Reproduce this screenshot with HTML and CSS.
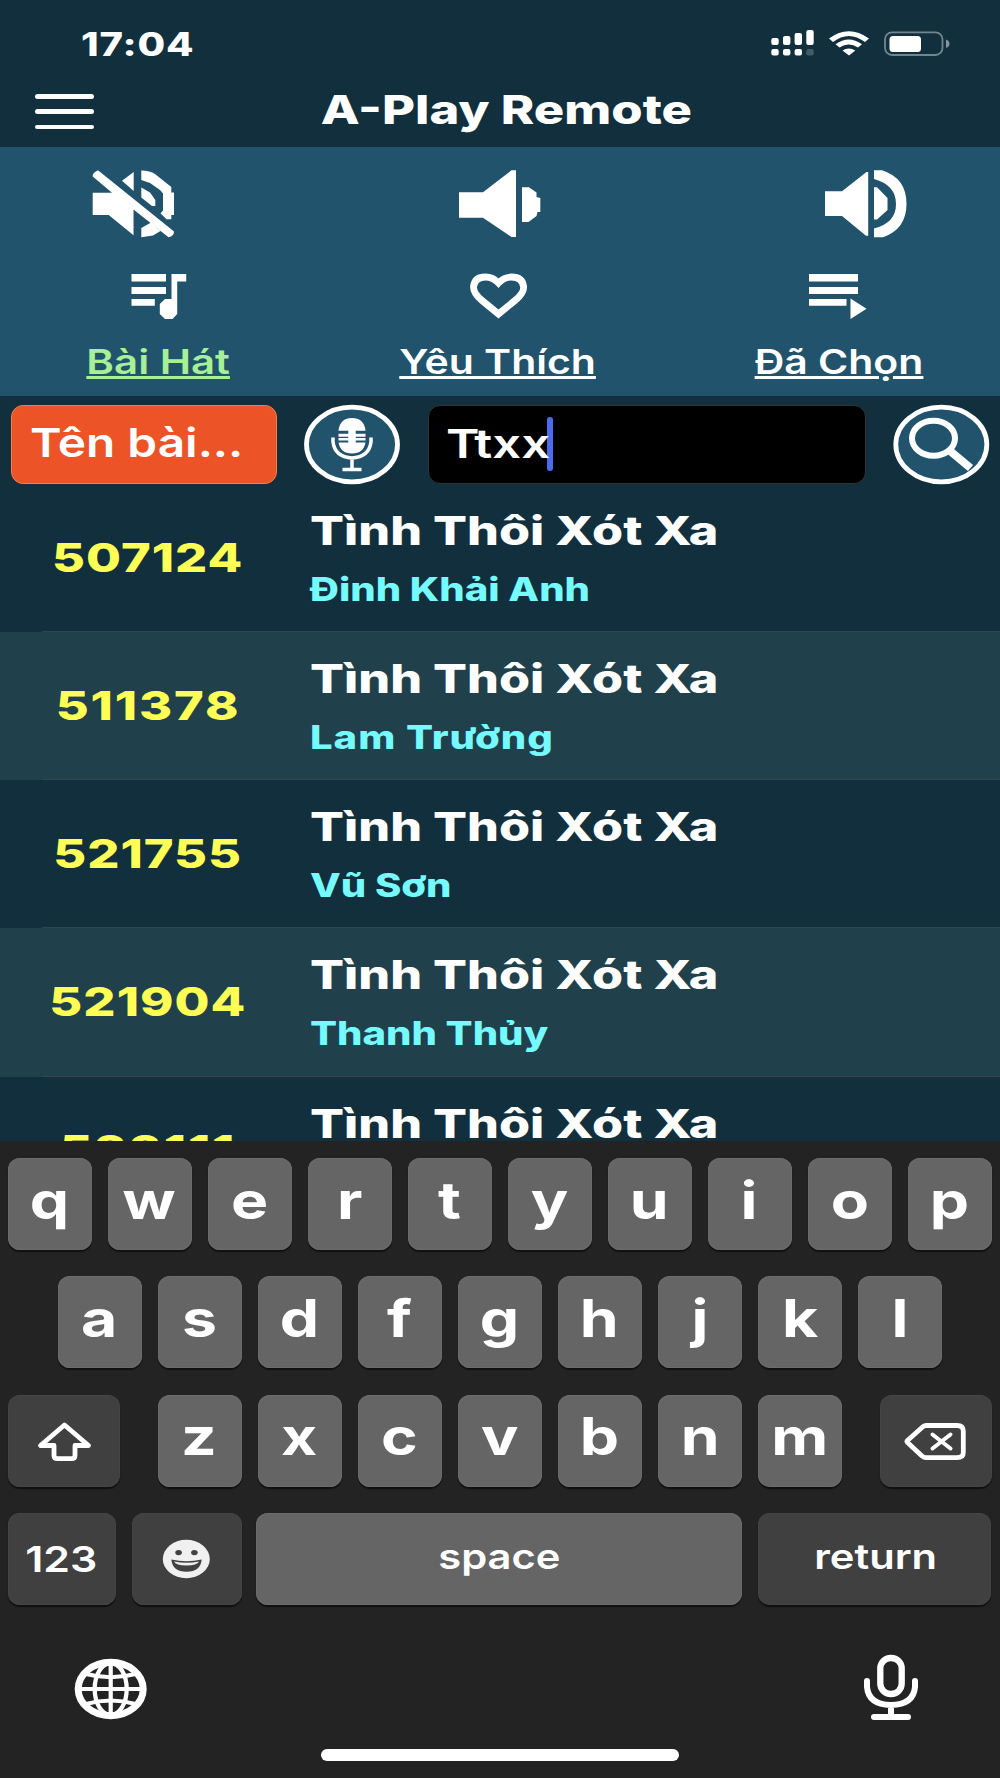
FILE: index.html
```html
<!DOCTYPE html>
<html lang="vi">
<head>
<meta charset="utf-8">
<title>A-Play Remote</title>
<link rel="stylesheet" href="styles.css">
</head>
<body>
<div class="phone">
  <header class="top">
    <div class="status">
      <span class="wide time">17:04</span>
      <svg class="status-icons" viewBox="770 28 182 30">
        <g fill="#fff">
          <rect x="771.3" y="38" width="7.4" height="7" rx="2"/><rect x="783" y="36" width="7.4" height="9" rx="2"/><rect x="794.6" y="33" width="7.4" height="12" rx="2"/><rect x="806.3" y="30" width="7.4" height="15" rx="2"/>
          <rect x="771.3" y="49" width="7.4" height="6.6" rx="2"/><rect x="783" y="49" width="7.4" height="6.6" rx="2"/><rect x="794.6" y="49" width="7.4" height="6.6" rx="2"/><rect x="806.3" y="49" width="7.4" height="6.6" rx="2" opacity=".22"/>
          <path d="M829 38.500Q848.700 24 869 38.500L865 42Q848.700 30 833 42Z"/>
          <path d="M835.500 44.300Q848.700 34.500 862 44.300L858 47.600Q848.700 41.200 839.500 47.600Z"/>
          <path d="M842.500 50.500Q848.700 46.300 855.300 50.500L849 55.500Z"/>
          <rect x="889.5" y="36" width="31.5" height="16" rx="3.500"/>
        </g>
        <rect x="885" y="32.300" width="57.500" height="22.700" rx="7" fill="none" stroke="#72868f" stroke-width="1.800"/>
        <path d="M946 39.500Q949.500 41 949.500 43.800Q949.500 46.500 946 48Z" fill="#8496a0"/>
      </svg>
    </div>
    <div class="nav">
      <button class="menu" aria-label="Menu"><i></i><i></i><i></i></button>
      <h1><span class="wide app-name">A-Play Remote</span></h1>
    </div>
  </header>

  <section class="panel">
    <svg class="volume" viewBox="0 160 1000 90" fill="#fff">
      <path d="M92.700 192.700H112L92.700 176.500Q92 173 98 170.300L174 231.500Q174 236 168.500 237.300L133.500 209.500V235.300L108.700 215H92.700Z"/>
      <path d="M122 180.700L133.700 172V191Z"/>
      <path d="M141.300 187.500L150 192.500L155.300 200V206H152L141.300 197.500Z"/>
      <path d="M141.300 170.500Q150 170.500 155 174L171.300 187V192.500H174V215H171.300V219.300H166.500L160.500 213.500L163 210.500V193.500L160 190L150 183L141.300 180Z"/>
      <path d="M141.300 237.300V228L151 222.500L160.500 231L153 235.500Z"/>
      <path d="M459 192.300H483L511.500 170.300H516V237H511.500L483 217.700H459Z"/>
      <path d="M522 187.300H529L536.500 192.500V197L540.300 198V212H537.500L536.500 216L528.500 222H522Z"/>
      <path d="M825 191.300H842L866.500 172H868.200V235.700H866L842 216H825Z"/>
      <path d="M874 187.300H877L887.500 198V210L877 219.500H874Z"/>
      <path d="M874 170.300H882Q906.500 178 906.500 204Q906.500 229 883 237.300H874V228.500Q896 223 896 204Q896 185 874 179Z"/>
    </svg>
    <div class="tabs">
      <a class="tab tab-active">
        <svg class="tab-icon" viewBox="129.500 272 60 49" fill="#fff">
          <path d="M132 274H166.500V281.500H132ZM132 287H166.500V294H132ZM132 299H155.300V305.800H132Z"/>
          <path d="M172 274H186.700V281.500H177.700V314L173 319H165.500L160.300 314V304L165.500 299H172Z"/>
        </svg>
        <span class="wide tab-label tab-songs">Bài Hát</span>
      </a>
      <a class="tab tab-mid">
        <svg class="tab-icon heart" viewBox="468 272 60 49"><path d="M498.500 314L482 300.500Q473.500 293.500 473.500 287Q474.500 277 485.500 277Q493 277 498.500 283Q504 277 511.500 277Q522.500 277 523.700 287Q523.700 293.500 515 300.500Z" fill="none" stroke="currentColor" stroke-width="6.800"/></svg>
        <span class="wide tab-label tab-fav">Yêu Thích</span>
      </a>
      <a class="tab tab-last">
        <svg class="tab-icon" viewBox="810.500 272 60 49" fill="currentColor">
          <path d="M809.500 274H858.500V281.500H809.500ZM809.500 287H858.500V294H809.500ZM809.500 299H847V305.800H809.500Z"/>
          <path d="M851 298.500L867 308.700L851 319Z"/>
        </svg>
        <span class="wide tab-label tab-picked">Đã Chọn</span>
      </a>
    </div>
  </section>

  <section class="search">
    <button class="filter"><span class="wide filter-label">Tên bài...</span></button>
    <svg class="round" viewBox="303 404 98 81">
      <ellipse cx="352" cy="444.500" rx="45.500" ry="37.300" fill="#21546c" stroke="#fff" stroke-width="4.800"/>
      <path d="M338.500 430.500Q340 418 352 418Q364 418 365.500 430.500ZM338.500 442.500Q340.500 453.500 352 453.500Q363.500 453.500 365.500 442.500Z" fill="#fff"/>
      <path d="M348.300 430H355.700V443H348.300ZM338.500 430.500H365.500V431H338.500ZM338.500 433.700H365.500V436.700H338.500ZM338.500 438H365.500V440.500H338.500Z" fill="#fff"/>
      <path d="M333 437.500V442Q335 457 352 458Q369 457 371 442V437.500M352 458V469M342.500 469.500H361.500" fill="none" stroke="#fff" stroke-width="3.500"/>
    </svg>
    <div class="field"><span class="wide query">Ttxx</span><i class="caret"></i></div>
    <svg class="round" viewBox="892 404 98 81">
      <ellipse cx="941.300" cy="444.500" rx="45.500" ry="37.300" fill="#21546c" stroke="#fff" stroke-width="4.800"/>
      <ellipse cx="933.500" cy="438.300" rx="21.500" ry="17.500" fill="none" stroke="#fff" stroke-width="6"/>
      <path d="M949.500 450.500L970.500 468" stroke="#fff" stroke-width="8"/>
    </svg>
  </section>

  <main class="list">
    <article class="row"><div class="code"><span class="wide num">507124</span></div><div class="song"><h2><span class="wide title">Tình Thôi Xót Xa</span></h2><p><span class="wide singer">Đinh Khải Anh</span></p></div></article>
    <article class="row"><div class="code"><span class="wide num num-loose">511378</span></div><div class="song"><h2><span class="wide title">Tình Thôi Xót Xa</span></h2><p><span class="wide singer loose">Lam Trường</span></p></div></article>
    <article class="row"><div class="code"><span class="wide num">521755</span></div><div class="song"><h2><span class="wide title">Tình Thôi Xót Xa</span></h2><p><span class="wide singer">Vũ Sơn</span></p></div></article>
    <article class="row"><div class="code"><span class="wide num">521904</span></div><div class="song"><h2><span class="wide title">Tình Thôi Xót Xa</span></h2><p><span class="wide singer">Thanh Thủy</span></p></div></article>
    <article class="row"><div class="code"><span class="wide num num-loose">523111</span></div><div class="song"><h2><span class="wide title">Tình Thôi Xót Xa</span></h2></div></article>
  </main>

  <section class="keyboard">
    <div class="keys"><b class="key"><span>q</span></b><b class="key"><span>w</span></b><b class="key"><span>e</span></b><b class="key"><span>r</span></b><b class="key"><span>t</span></b><b class="key"><span>y</span></b><b class="key"><span>u</span></b><b class="key"><span>i</span></b><b class="key"><span>o</span></b><b class="key"><span>p</span></b></div>
    <div class="keys"><b class="key"><span>a</span></b><b class="key"><span>s</span></b><b class="key"><span>d</span></b><b class="key"><span>f</span></b><b class="key"><span>g</span></b><b class="key"><span>h</span></b><b class="key"><span>j</span></b><b class="key"><span>k</span></b><b class="key"><span>l</span></b></div>
    <div class="keys spread">
      <b class="key dark side"><svg class="glyph" viewBox="8 1394 112 92"><path d="M64.500 1424L40.500 1444.500H54V1454.500Q54 1457.700 57.500 1457.700H71.500Q75 1457.700 75 1454.500V1444.500H88.500Z" fill="none" stroke="#fff" stroke-width="4.800" stroke-linejoin="round"/></svg></b>
      <div class="keys"><b class="key"><span>z</span></b><b class="key"><span>x</span></b><b class="key"><span>c</span></b><b class="key"><span>v</span></b><b class="key"><span>b</span></b><b class="key"><span>n</span></b><b class="key"><span>m</span></b></div>
      <b class="key dark side"><svg class="glyph" viewBox="880 1394 112 92" fill="none" stroke="#fff" stroke-linejoin="round" stroke-linecap="round"><path d="M926 1424.500H957Q963.300 1424.500 963.300 1430V1451.500Q963.300 1456.700 957 1456.700H926Q924 1456.700 922 1455L907.500 1441.500Q906.500 1440.500 907.500 1439.500L922 1426.500Q924 1424.500 926 1424.500Z" stroke-width="4.800"/><path d="M932.500 1433.500L950.500 1447.500M950.500 1433.500L932.500 1447.500" stroke-width="4"/></svg></b>
    </div>
    <div class="keys bottom">
      <b class="key dark numeric"><span>123</span></b>
      <b class="key dark emoji"><svg class="glyph" viewBox="132 1513 110 92"><ellipse cx="186.300" cy="1559" rx="23.500" ry="19.200" fill="#f0f0f0"/><g fill="#414141"><ellipse cx="178.600" cy="1552.600" rx="3.300" ry="2.700"/><ellipse cx="194.400" cy="1552.600" rx="3.300" ry="2.700"/><path d="M171.300 1559.500Q186.500 1563 201.700 1559.500Q200.500 1571.800 186.500 1571.800Q172.500 1571.800 171.300 1559.500Z"/></g><path d="M174 1561.500Q186.500 1564 199 1561.500Q197 1565.500 186.500 1565.500Q176 1565.500 174 1561.500Z" fill="#f0f0f0"/></svg></b>
      <b class="key space"><span>space</span></b>
      <b class="key dark return"><span>return</span></b>
    </div>
    <div class="dock">
      <svg class="globe" viewBox="74 1658 74 62" fill="none" stroke="#fff"><ellipse cx="110.700" cy="1689" rx="32.500" ry="26.700" stroke-width="7"/><ellipse cx="110.700" cy="1689" rx="16" ry="26" stroke-width="4.300"/><path d="M110.700 1662V1716M78 1689H143" stroke-width="4.200"/><path d="M86 1674Q110.700 1680.500 135.500 1674M86 1704Q110.700 1697 135.500 1704" stroke-width="4"/></svg>
      <svg class="dictate" viewBox="862 1653 58 69" fill="none" stroke="#fff" stroke-linecap="round"><rect x="880.300" y="1658" width="21.400" height="36" rx="10.500" stroke-width="6.300"/><path d="M867 1681V1687Q868.500 1704.500 891 1705Q913.500 1704.500 915 1687V1681M891 1706V1716M874 1717H908" stroke-width="6"/></svg>
    </div>
    <div class="home"></div>
  </section>
</div>
</body>
</html>
```
FILE: styles.css
```css
* { box-sizing: border-box; }
body { margin: 0; background: #112f3c; }
button { padding: 0; border: 0; background: none; font: inherit; color: inherit; }
h1, h2, p { margin: 0; font: inherit; }
svg { display: block; }

.phone {
  width: 1000px; height: 1778px; overflow: hidden;
  display: flex; flex-direction: column;
  background: #112f3c; color: #fff;
  font-family: Inter, "Liberation Sans", sans-serif;
}
.wide { display: inline-block; white-space: nowrap; transform: scaleX(1.25); }

/* header */
.top { height: 147px; flex: none; }
.status { height: 80px; display: flex; justify-content: space-between; padding: 28px 48px 0 81px; }
.time { font-size: 32px; line-height: 33px; font-weight: 800; letter-spacing: .7px; transform-origin: left; }
.status-icons { width: 182px; height: 30px; }
.nav { height: 67px; display: grid; grid-template-columns: 165px 1fr 187px; padding-left: 35px; }
.menu { width: 59px; height: 35px; margin-top: 14px; display: flex; flex-direction: column; justify-content: space-between; }
.menu i { height: 4.5px; border-radius: 3px; background: #fff; }
.nav h1 { text-align: center; font-size: 40px; line-height: 60px; font-weight: 800; }
.app-name { transform: scaleX(1.268); }

/* volume and tabs */
.panel { height: 249px; flex: none; background: #21546c; padding-top: 13px; }
.volume { width: 1000px; height: 90px; }
.tabs { display: grid; grid-template-columns: 317px 362px 321px; padding-top: 22px; }
.tab { display: flex; flex-direction: column; align-items: center; }
.tab-icon { width: 60px; height: 49px; overflow: visible; }
.tab-label { margin-top: 17px; font-size: 34px; line-height: 48px; font-weight: 600; transform: scaleX(1.205); text-decoration: underline; text-decoration-thickness: 3px; text-underline-offset: 2px; }
.tab-songs { color: #a6f098; transform: scaleX(1.235); }

/* search bar */
.search { height: 88px; flex: none; display: flex; padding: 9px 10px 0 11px; }
.filter { width: 266px; height: 79px; border: 1px solid #f07d4c; border-radius: 12px; background: #ec5428; text-align: left; padding: 0 0 3px 18px; }
.filter-label, .query { font-size: 40px; line-height: 48px; font-weight: 600; transform: scaleX(1.195); transform-origin: left; }
.round { width: 98px; height: 81px; margin: -1px 0 0 26px; flex: none; }
.field { width: 438px; height: 79px; margin-left: 27px; border: 1.5px solid #333; border-radius: 12px; background: #000; display: flex; align-items: center; padding: 0 0 2px 17px; }
.field + .round { margin-left: 26px; }
.query { width: 101px; transform: scaleX(1.27); }
.caret { width: 6px; height: 54px; border-radius: 3px; background: #4c6cf0; }

/* song list */
.list { height: 657px; flex: none; overflow: hidden; }
.row { height: 148.150px; display: grid; grid-template-columns: 296px 1fr; }
.row:nth-child(even) { background: #20404c; }
.row { border-bottom: 1px solid; border-image: linear-gradient(90deg, transparent 43px, #30474f 43px) 1; }
.code { text-align: center; color: #ffff55; font-size: 40px; line-height: 48px; font-weight: 800; padding-top: 49.500px; }
.num { letter-spacing: .8px; transform: scaleX(1.265); }
.num-loose { letter-spacing: 1.500px; }
.song { padding: 23px 0 0 14px; }
.song h2 { font-size: 40px; line-height: 48px; font-weight: 800; height: 48px; }
.song p { color: #75fbfd; font-size: 32px; line-height: 40px; font-weight: 800; margin-top: 15px; }
.title, .singer { transform-origin: left; }
.title { transform: scaleX(1.256); }
.loose { letter-spacing: .8px; }

/* keyboard */
.keyboard { flex: 1; background: #232323; padding: 17px 8px 0; display: flex; flex-direction: column; }
.keys { display: flex; justify-content: center; gap: 16.100px; margin-bottom: 26.300px; }
.keys .keys { margin: 0; }
.spread { justify-content: space-between; gap: 0; }
.key { width: 84px; height: 92px; border-radius: 12px; background: #656565; box-shadow: inset 0 0 0 1px #6c6c6c, 0 2px 1px #101010; display: flex; align-items: center; justify-content: center; font-size: 52px; font-weight: 700; line-height: 60px; padding: 0 1px 7px 0; }
.key span { transform: scaleX(1.2); }
.dark { background: #404040; box-shadow: inset 0 0 0 1px #454545, 0 2px 1px #101010; padding: 0; }
.side { width: 112px; }
.glyph { width: 100%; height: 92px; }
.bottom { justify-content: flex-start; gap: 0; margin-bottom: 0; }
.numeric { width: 107.500px; font-size: 36px; font-weight: 600; }
.numeric span { transform: scaleX(1.19); }
.emoji { width: 110px; margin: 0 14px 0 16.500px; }
.space { width: 486px; font-size: 35px; font-weight: 600; padding: 0 0 5px; }
.return { width: 233px; margin-left: 16px; font-size: 35px; font-weight: 600; padding: 0 0 5px 2px; }
.space span, .return span { transform: scaleX(1.19); }
.dock { display: flex; justify-content: space-between; align-items: center; padding: 0 72px 0 66px; margin-top: 48px; height: 69px; }
.globe { width: 74px; height: 62px; margin-top: 4px; }
.dictate { width: 58px; height: 69px; }
.home { width: 358px; height: 12px; margin: 27px auto 0; border-radius: 6px; background: #fff; }
```
